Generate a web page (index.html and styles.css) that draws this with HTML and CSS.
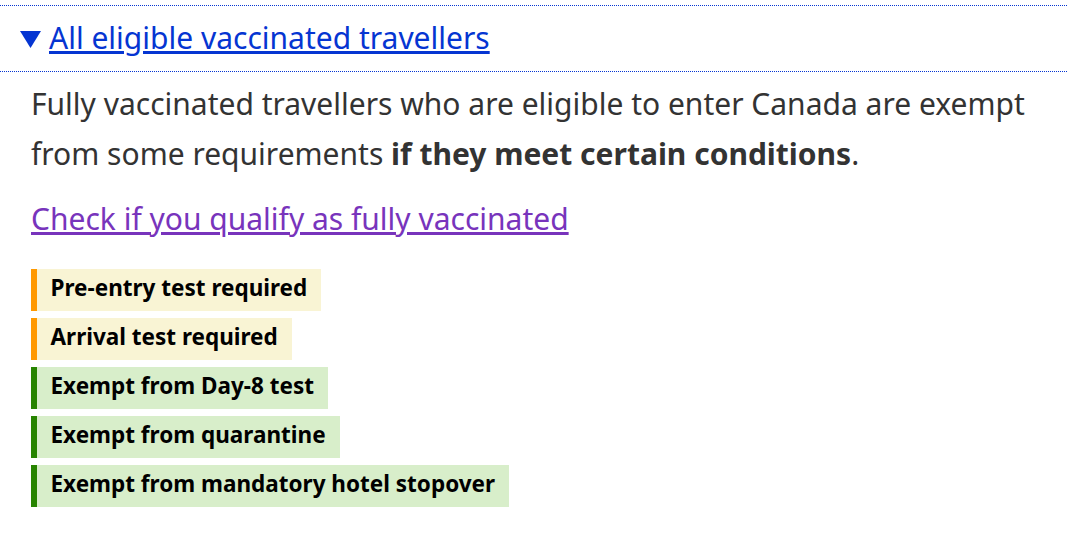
FILE: index.html
```html
<!DOCTYPE html>
<html lang="en">
<head>
    <meta charset="UTF-8">
    <title>All eligible vaccinated travellers</title>
    <link rel="stylesheet" href="styles.css">
</head>
<body>
    <details class="panel" open>
        <summary class="panel-title">
            <svg class="arrow" width="21" height="17" viewBox="0 0 21 17"><path d="M0 0H21L10.5 17Z" fill="#0535D2"/></svg>
            <a href="#">All eligible vaccinated travellers</a>
        </summary>
        <div class="panel-body">
            <p>Fully vaccinated travellers who are eligible to enter Canada are exempt from some requirements <strong>if they meet certain conditions</strong>.</p>
            <p class="check"><a class="visited" href="#">Check if you qualify as fully vaccinated</a></p>
            <ul class="labels">
                <li class="label warn">Pre-entry test required</li>
                <li class="label warn">Arrival test required</li>
                <li class="label ok">Exempt from Day-8 test</li>
                <li class="label ok">Exempt from quarantine</li>
                <li class="label ok">Exempt from mandatory hotel stopover</li>
            </ul>
        </div>
    </details>
</body>
</html>
```

FILE: styles.css
```css
body {
    font-family: 'Noto Sans', 'Open Sans', sans-serif;
    color: #333333;
    background: #FFFFFF;
    margin: 0;
    padding-top: 5px;
}
.panel {
    border-top: 1px dotted #0535D2;
}
.panel-title {
    list-style: none;
    display: flex;
    align-items: center;
    gap: 8px;
    padding: 10px 20px 11px;
    font-size: 30px;
    line-height: 44px;
    border-bottom: 1px dotted #0535D2;
    cursor: pointer;
}
.panel-title::-webkit-details-marker {
    display: none;
}
.arrow {
    flex: none;
    margin-top: 3px;
}
.panel-title a {
    color: #0535D2;
}
.panel-body {
    padding: 0 31px;
    font-size: 30px;
    line-height: 49.5px;
}
.panel-body p {
    margin: 7px 0 16px;
}
.panel-body strong {
    font-weight: bold;
}
.visited {
    color: #7834BC;
}
.labels {
    list-style: none;
    margin: 25px 0 0;
    padding: 0;
    display: flex;
    flex-direction: column;
    align-items: flex-start;
    gap: 7px;
}
.label {
    font-size: 22.5px;
    line-height: 31.5px;
    font-weight: bold;
    color: #000000;
    padding: 3.5px 14px 7px 13.5px;
    border-left: 6px solid;
}
.warn {
    background: #F9F4D4;
    border-color: #FF9900;
}
.ok {
    background: #D8EECA;
    border-color: #278400;
}
```
